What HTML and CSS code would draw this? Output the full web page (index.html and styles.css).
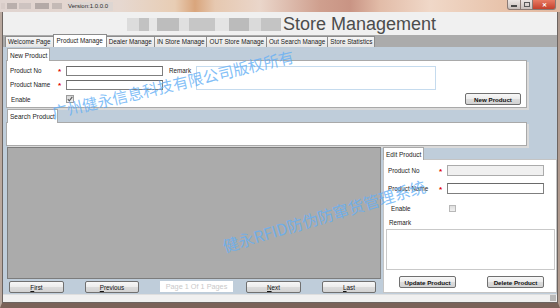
FILE: index.html
```html
<!DOCTYPE html>
<html>
<head>
<meta charset="utf-8">
<link rel="stylesheet" href="styles.css">
</head>
<body>
<div class="win">
  <div class="titlebar">
    <div class="tmosaic"><span class="tm a"></span><span class="tm b"></span><span class="tm c"></span><span class="tm d"></span><span class="tm e"></span></div>
    <span class="version">Version:1.0.0.0</span>
    <div class="wbtns">
      <span class="wb wmin"><span class="bar"></span></span>
      <span class="wb wmax"><span class="sq"></span></span>
      <span class="wb wclose">&#x2715;</span>
    </div>
  </div>
  <div class="frame">
    <div class="client">
      <div class="header">
        <div class="hmosaic"><span class="hm l1"></span><span class="hm d1"></span><span class="hm l2"></span><span class="hm d2"></span><span class="hm l3"></span><span class="hm d3"></span><span class="hm l4"></span><span class="hm d4"></span><span class="hm l5"></span><span class="hm d5"></span></div>
        <div class="apptitle">Store Management</div>
      </div>
      <div class="tabs">
        <div class="tab">Welcome Page</div>
        <div class="tab active">Product Manage</div>
        <div class="tab">Dealer Manage</div>
        <div class="tab">IN Store Manage</div>
        <div class="tab">OUT Store Manage</div>
        <div class="tab">Out Search Manage</div>
        <div class="tab">Store Statistics</div>
      </div>
      <div class="content">
        <div class="group">
          <div class="gtabs"><div class="gtab">New Product</div></div>
          <div class="gbody newbody">
            <span class="lbl c1">Product No</span><span class="star c2">*</span><span class="input c3"></span>
            <span class="lbl c5">Remark</span><span class="rbox"></span>
            <span class="lbl c1">Product Name</span><span class="star c2">*</span><span class="input c3"></span>
            <span class="lbl c1 en">Enable</span>
            <span class="chk checked c3"><svg width="6" height="6" viewBox="0 0 6 6"><path d="M0.8 3.2 L2.3 4.8 L5.3 0.8" fill="none" stroke="#5a5a5a" stroke-width="1.1"/></svg></span>
            <span class="btn bold c7">New Product</span>
          </div>
        </div>
        <div class="group search">
          <div class="gtabs tall"><div class="gtab">Search Product</div></div>
          <div class="gbody searchbody"></div>
        </div>
        <div class="lower">
          <div class="leftcol">
            <div class="gridview"></div>
            <div class="pager">
              <span class="btn pbtn w55"><u>F</u>irst</span>
              <span class="btn pbtn w54"><u>P</u>revious</span>
              <span class="pagelbl">Page 1 Of 1 Pages</span>
              <span class="btn pbtn w55"><u>N</u>ext</span>
              <span class="btn pbtn w54"><u>L</u>ast</span>
            </div>
          </div>
          <div class="editgroup">
            <div class="gtabs"><div class="gtab">Edit Product</div></div>
            <div class="gbody editbody">
              <div class="erow"><span class="elbl">Product No</span><span class="star">*</span><span class="input disabled"></span></div>
              <div class="erow"><span class="elbl">Product Name</span><span class="star">*</span><span class="input"></span></div>
              <div class="erow enrow"><span class="enlbl">Enable</span><span class="chk small"></span></div>
              <div class="rlbl">Remark</div>
              <div class="ebox"></div>
              <div class="ebtns"><span class="btn bold w57">Update Product</span><span class="btn bold w57">Delete Product</span></div>
            </div>
          </div>
        </div>
      </div>
      <div class="status"><span class="grip"></span></div>
    </div>
  </div>
  <div class="wm wm1">广州健永信息科技有限公司版权所有</div>
  <div class="wm wm2">健永RFID防伪防窜货管理系统</div>
</div>
</body>
</html>
```
FILE: styles.css
```css
* { box-sizing: border-box; }
html, body { margin: 0; padding: 0; }
body {
  width: 560px; height: 308px; overflow: hidden;
  font-family: "Liberation Sans", Arial, sans-serif;
  font-size: 6.3px; color: #1e1e1e; background: #6e5a50;
}
.win { position: relative; width: 560px; height: 308px; }

/* title bar */
.titlebar {
  height: 12px; display: flex; align-items: center;
  background: linear-gradient(90deg, #e0d4d0 0px, #e6d8d0 120px, #e8cdb4 175px, #d9a57c 195px, #e6c8b0 215px, #ead6ca 260px, #cf9f8e 320px, #c99484 350px, #e2bca8 380px, #f0d8c8 430px, #e8c4ac 500px, #e2b8a0 560px);
}
.tmosaic { display: flex; height: 6px; width: 64px; margin-left: 1px; }
.tm { height: 6px; display: block; }
.tm.a { width: 4px; background: #d8ccc8; }
.tm.b { width: 10px; background: #b9afac; margin-left: 2px; }
.tm.c { width: 12px; background: #cdc3c0; margin-left: 2px; }
.tm.d { width: 14px; background: #b4aaa7; margin-left: 4px; }
.tm.e { width: 10px; background: #c4bab6; margin-left: 3px; }
.version {
  margin-left: 2px; height: 9px; padding: 0 1px; line-height: 9px;
  background: #ddd6d2; color: #2a2a2a; font-size: 6px; width: 46px;
}
.wbtns { margin-left: auto; margin-right: 4px; display: flex; align-self: flex-start; height: 10px; }
.wb { display: flex; align-items: center; justify-content: center; height: 10px; border: 1px solid #8a7a74; border-top: none; }
.wmin { width: 14px; background: linear-gradient(#ece6e4, #c9c0bc); border-radius: 0 0 0 3px; }
.wmax { width: 12px; background: linear-gradient(#ece6e4, #c9c0bc); border-left: none; }
.wclose { width: 23px; background: linear-gradient(#e87a62, #c4402c); border-left: none; border-radius: 0 0 3px 0; color: #fff; font-size: 6px; font-weight: bold; }
.bar { width: 6px; height: 2px; background: #4a4a4a; margin-top: 2px; }
.sq { width: 6px; height: 5px; border: 1px solid #5a5a5a; }

/* frame */
.frame { height: 296px; border-left: 2px solid #b9a89e; border-right: 2px solid #b09a8e; border-bottom: 5px solid #7a6258; }
.client { height: 291px; border-left: 1px solid #6c6460; border-right: 1px solid #6c6460; border-bottom: 1px solid #6c6460; display: flex; flex-direction: column; }

.header { height: 23px; background: #f0f0f0; display: flex; align-items: center; padding-top: 1px; }
.hmosaic { display: flex; margin-left: 124px; width: 154px; height: 13px; }
.hm { display: block; height: 13px; }
.hm.l1 { width: 12px; background: #dcdcdc; }
.hm.d1 { width: 10px; background: #c2c2c2; }
.hm.l2 { width: 8px; background: #e6e6e6; }
.hm.d2 { width: 22px; background: #bdbdbd; }
.hm.l3 { width: 10px; background: #e0e0e0; }
.hm.d3 { width: 26px; background: #c6c6c6; }
.hm.l4 { width: 14px; background: #e4e4e4; }
.hm.d4 { width: 20px; background: #bbbbbb; }
.hm.l5 { width: 12px; background: #dadada; }
.hm.d5 { width: 20px; background: #c4c4c4; }
.apptitle { margin-left: 2px; font-size: 18px; line-height: 18px; color: #4c4c4c; }

/* main tabs */
.tabs { height: 12px; background: #ababab; display: flex; align-items: flex-end; padding-left: 2px; }
.tab {
  height: 11px; line-height: 10px; padding: 0 2px; white-space: nowrap;
  background: linear-gradient(#f6f6f6, #e6e6e6); border: 1px solid #8c8c8c; border-bottom: none;
  margin-right: -1px; color: #1a1a1a;
}
.tab.active { height: 13px; background: #fff; padding: 0 3px; line-height: 11px; position: relative; z-index: 1; }

/* content */
.content { height: 247px; background: #bfcdda; padding: 1px 0 0 3px; display: flex; flex-direction: column; }
.group { width: 521px; display: flex; flex-direction: column; }
.gtabs { height: 12px; display: flex; padding-left: 1px; }
.gtabs.tall { height: 13px; margin-top: 1px; }
.gtab {
  background: #fff; border: 1px solid #a9a9a9; border-bottom: none;
  padding: 0 2px; display: flex; align-items: center; white-space: nowrap;
  height: calc(100% + 1px); margin-bottom: -1px; position: relative; z-index: 1;
  font-size: 6.5px; color: #222;
}
.gbody { background: #fff; border: 1px solid #a9a9a9; box-shadow: 2px 2px 0 #dadada; }

.newbody {
  height: 48px; padding: 4px 5px 2px 3px;
  display: grid; grid-template-columns: 48px 8px 97px 6px 27px 240px 1fr;
  grid-template-rows: 11px 11px 12px; row-gap: 3px; align-items: center;
}
.c1 { grid-column: 1; }
.c2 { grid-column: 2; }
.c3 { grid-column: 3; }
.c5 { grid-column: 5; }
.c7 { grid-column: 7; justify-self: end; }
.lbl { white-space: nowrap; color: #222; }
.en { margin-left: 1px; }
.star { color: #e00000; font-size: 8px; line-height: 8px; padding-top: 3px; height: 11px; font-weight: bold; }
.input { display: block; height: 11px; border: 1px solid #7f7f7f; border-top-color: #6a6a6a; background: #fff; }
.newbody .input { height: 10px; }
.input.disabled { background: #f0f0f0; border-color: #ababab; }
.rbox { grid-column: 6; grid-row: 1 / span 2; align-self: stretch; margin-top: 1px; border: 1px solid #c5dbee; background: #fff; }
.chk { width: 8px; height: 8px; border: 1px solid #9c9c9c; background: linear-gradient(#d6d6d6, #f2f2f2); display: flex; align-items: center; justify-content: center; }
.chk.small { width: 7px; height: 7px; border-color: #b8b8b8; background: linear-gradient(#dedede, #f0f0f0); }

.btn {
  display: flex; align-items: center; justify-content: center; height: 12px; white-space: nowrap;
  background: linear-gradient(#f7f7f7 0%, #ececec 50%, #dcdcdc 51%, #d2d2d2 100%);
  border: 1px solid #707070; border-radius: 2px; color: #111;
}
.bold { font-weight: bold; font-size: 6.2px; }
.newbody .btn { width: 56px; }

.searchbody { height: 24px; }

.lower { height: 148px; display: flex; }
.leftcol { margin-left: 1px; width: 374px; padding-top: 1px; display: flex; flex-direction: column; }
.gridview { height: 132px; background: #ababab; border: 1px solid #7c7c7c; border-right-color: #8a8a8a; }
.pager { margin-top: 2px; height: 12px; display: flex; padding-left: 2px; gap: 21px; }
.pbtn { font-size: 6.3px; }
.w55 { width: 55px; }
.w54 { width: 54px; }
.w57 { width: 57px; }
.pagelbl { width: 73px; height: 11px; background: #fff; color: #c9c9c9; font-size: 7.3px; display: flex; align-items: center; justify-content: center; margin-right: -8px; }

.editgroup { margin-left: 2px; width: 174px; padding-top: 1px; display: flex; flex-direction: column; }
.editgroup .gtabs { padding-left: 0; }
.editbody { height: 134px; padding-top: 5px; box-shadow: none; border-color: #c4c4c4; }
.erow { display: flex; align-items: center; height: 11px; margin-left: 4px; }
.erow + .erow { margin-top: 7px; }
.elbl { width: 51px; white-space: nowrap; color: #222; }
.erow .star { width: 8px; }
.erow .input { width: 97px; }
.enrow { height: 7px; margin-top: 11px !important; margin-left: 7px; }
.enlbl { width: 58px; color: #222; }
.rlbl { margin: 7px 0 0 5px; height: 8px; line-height: 8px; color: #222; }
.ebox { margin: 2px 0 0 2px; width: 169px; height: 41px; border: 1px solid #c9c9c9; }
.ebtns { margin: 6px 0 0 15px; display: flex; gap: 31px; }

.status { height: 8px; background: #f0f0f0; border-top: 1px solid #dedede; display: flex; justify-content: flex-end; align-items: flex-end; }
.grip { width: 6px; height: 6px; margin: 0 1px 1px 0; background: radial-gradient(circle, #9a9a9a 0.6px, transparent 0.9px) 0 0 / 2px 2px; }

/* watermarks */
.wm {
  position: absolute; white-space: nowrap; line-height: 1;
  font-family: "Noto Sans CJK SC", "Noto Sans", sans-serif;
  color: rgba(100, 175, 245, 0.8); transform-origin: 0 50%;
  pointer-events: none; z-index: 5;
}
.wm1 { left: 52px; top: 105px; font-size: 15.5px; transform: rotate(-13.2deg); }
.wm2 { left: 223px; top: 238px; font-size: 16px; transform: rotate(-16.8deg); }
```
